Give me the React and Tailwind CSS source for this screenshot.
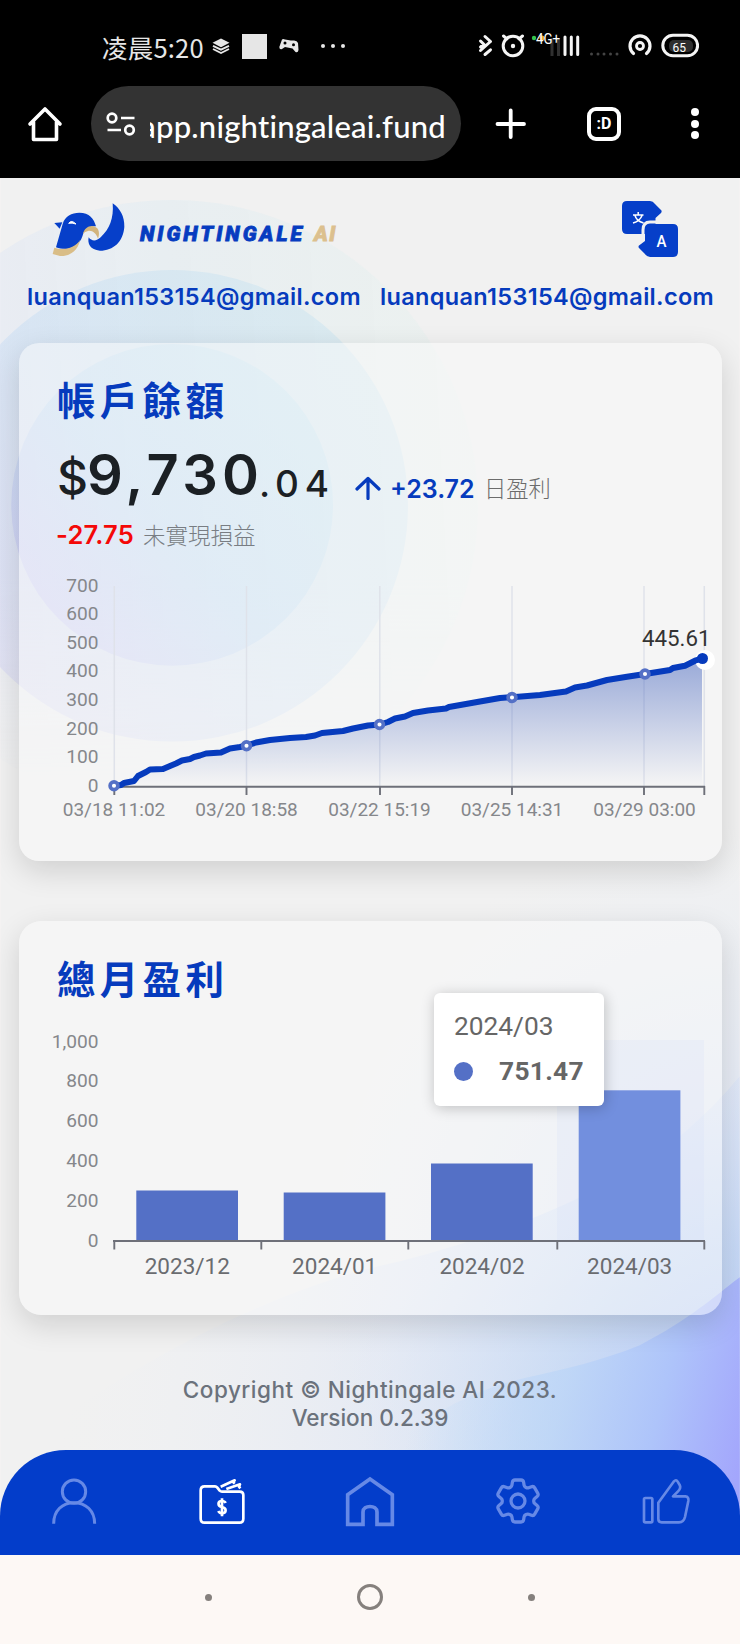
import React from "react";
import { HiOutlineCog6Tooth } from "react-icons/hi2";

const LINE =
  "M114 786L121 785L124 783L134 781L138 776L142 774L146 772L150 769.5L163 769L170 766L176 763.5L182 760.5L190 759L194 757L200 755.5L206 753.5L221 752.5L230 748.5L240 747L246.500 745.500L256 742.500L270 740L290 738L306 737L315 735.5L322 733L343 731L353 728.500L368 725.500L380 724.500L388 722L395 718.500L405 716.500L413 713L428 710.5L446 708.500L449 707L480 701.500L500 698L512 697.200L540 695L566 691.500L575 687.500L587 685.500L607 680L627 676.700L645 674L670 670L673 668L685 665.700L695 660.700L702 658.500";

const ticks = [
  [114, "03/18 11:02"],
  [246.5, "03/20 18:58"],
  [379.5, "03/22 15:19"],
  [512, "03/25 14:31"],
  [644.5, "03/29 03:00"],
];

const bars = [
  { x: 136.300, top: 1190.500, label: "2023/12" },
  { x: 283.700, top: 1192.500, label: "2024/01" },
  { x: 431, top: 1163.500, label: "2024/02" },
  { x: 578.700, top: 1090.300, label: "2024/03", active: true },
];

function StatusBar() {
  return (
    <div className="flex h-[86px] items-start justify-between pr-[41px] pl-[102px] text-[#e6e6e6]">
      <div className="flex h-[92px] items-center">
        <span className="mt-[2px] w-[102px] font-['Noto_Sans_CJK_SC',sans-serif] text-[25.500px] leading-none tracking-[0.200px] whitespace-nowrap">
          凌晨5:20
        </span>
        <svg className="ml-[8px] h-[18px] w-[18px]" viewBox="0 0 18 18" fill="currentColor">
          <path d="M9 1.500L17.500 5.800L9 10.200L0.500 5.800Z" />
          <path d="M1 8.800L9 12.700L17 8.800M1 12L9 16L17 12" fill="none" stroke="currentColor" strokeWidth="1.900" />
        </svg>
        <span className="ml-[12px] h-[25px] w-[25px] bg-[#e6e6e6]" />
        <svg className="ml-[12px] h-[16px] w-[20px]" viewBox="0 0 20 16">
          <path d="M3 1.500Q4 .5 6 1.500L9 2Q12 2.500 14 2.500Q18 2 19 5L19.500 12Q19 15 16.500 14L13.500 10.500L6 9L3 11Q.5 12 .3 9Z" fill="currentColor" />
          <circle cx="6" cy="5" r="1.500" />
          <circle cx="14.500" cy="6.800" r="1.500" />
        </svg>
        <span className="ml-[22px] flex gap-[6px]">
          <i className="h-1 w-1 rounded-full bg-[#e6e6e6]" />
          <i className="h-1 w-1 rounded-full bg-[#e6e6e6]" />
          <i className="h-1 w-1 rounded-full bg-[#e6e6e6]" />
        </span>
      </div>
      <svg className="h-[86px] w-[221px]" viewBox="478 0 221 86" fill="none" stroke="#f5f5f5" strokeWidth="3" strokeLinecap="round">
        <path d="M485 36.500L490.500 41.500M480.500 41L483.500 44L480.500 47M490.500 41.500L480.500 50.500M485 54.500L490.500 49.800" />
        <circle cx="513" cy="46" r="9.800" />
        <path d="M503.500 36L507 38.800M522.500 36L519 38.800" />
        <circle cx="513" cy="46" r="2.200" fill="#f5f5f5" stroke="none" />
        <circle cx="534" cy="38" r="2.200" fill="#36c64f" stroke="none" />
        <circle cx="542" cy="38" r="2.500" fill="#f0a52c" stroke="none" />
        <g stroke="#303030" strokeLinecap="butt"><path d="M552 38V56M558.500 38V56" /></g>
        <path d="M565 37V54.500M571.300 37V54.500M577.700 37V54.500" />
        <text x="536" y="43.500" textLength="24" lengthAdjust="spacingAndGlyphs" fill="#fff" stroke="none" fontFamily="Roboto, sans-serif" fontSize="15">4G+</text>
        <g fill="#444" stroke="none">
          <circle cx="591.500" cy="54" r="1.500" /><circle cx="598" cy="54" r="1.500" /><circle cx="604" cy="54" r="1.500" /><circle cx="610.500" cy="54" r="1.500" /><circle cx="617" cy="54" r="1.500" />
        </g>
        <path d="M633.500 53.500A10 10 0 1 1 646.500 53.500" strokeWidth="3.200" />
        <circle cx="640" cy="46" r="3.500" strokeWidth="2.800" />
        <rect x="669" y="40" width="24" height="12" rx="5" fill="#2e2e2e" stroke="none" />
        <rect x="662.800" y="35.300" width="34.800" height="20.500" rx="10.200" />
        <text x="672.500" y="51.500" textLength="13.500" lengthAdjust="spacingAndGlyphs" fill="#fff" stroke="none" fontFamily="Roboto, sans-serif" fontSize="13.500">65</text>
      </svg>
    </div>
  );
}

function BrowserBar() {
  return (
    <div className="flex h-[92px] items-start">
      <svg className="mt-[20px] ml-[27px] h-[36px] w-[36px]" viewBox="0 0 36 36" fill="none" stroke="#fff" strokeWidth="3.600" strokeLinecap="round" strokeLinejoin="round">
        <path d="M3 18L18 3L33 18M6.500 16V33.500H29.500V16" />
      </svg>
      <div className="ml-[28px] flex h-[75px] w-[370px] items-center rounded-full bg-[#333333] pl-[15px]">
        <svg className="h-[26px] w-[30px]" viewBox="0 0 30 26" fill="none" stroke="#fff" strokeWidth="2.700">
          <circle cx="6" cy="7" r="4.300" /><path d="M15 7H28.500M1.500 19H15" /><circle cx="23.500" cy="19" r="4.300" />
        </svg>
        <div className="mt-[5px] ml-[14px] flex h-[44px] w-[296px] items-center justify-end overflow-hidden">
          <span className="font-[Lato,sans-serif] text-[31px] font-medium tracking-[0.220px] whitespace-nowrap text-white">app.nightingaleai.fund</span>
        </div>
      </div>
      <svg className="mt-[20px] ml-[32px] h-[36px] w-[36px]" viewBox="0 0 36 36" stroke="#fff" strokeWidth="3.800" strokeLinecap="round">
        <path d="M4.500 18H31M17.700 4.500V31" />
      </svg>
      <div className="mt-[21px] ml-[58px] flex h-[34px] w-[34px] items-center justify-center rounded-[9px] border-[4px] border-white font-[Roboto,sans-serif] text-[16px] leading-none font-bold text-white">
        :D
      </div>
      <div className="mt-[22px] ml-[70px] flex flex-col gap-[3.500px]">
        <i className="h-[8px] w-[8px] rounded-full bg-white" />
        <i className="h-[8px] w-[8px] rounded-full bg-white" />
        <i className="h-[8px] w-[8px] rounded-full bg-white" />
      </div>
    </div>
  );
}

function Backdrop() {
  return (
    <svg className="absolute inset-0 h-full w-full" viewBox="0 178 740 1378">
      <defs>
        <linearGradient id="ring" x1="0.100" y1="0.850" x2="0.850" y2="0.150">
          <stop offset="0" stopColor="#b3a9f6" />
          <stop offset="0.450" stopColor="#9ccaf2" />
          <stop offset="1" stopColor="#a8dcf0" />
        </linearGradient>
        <linearGradient id="outerRing" x1="0" y1="0.500" x2="1" y2="0.450">
          <stop offset="0" stopColor="#cfd0fb" stopOpacity="0.240" />
          <stop offset="0.500" stopColor="#c8e6f6" stopOpacity="0.200" />
          <stop offset="1" stopColor="#d9f5ec" stopOpacity="0.180" />
        </linearGradient>
        <linearGradient id="midRing" x1="0" y1="0.750" x2="0.800" y2="0.100">
          <stop offset="0" stopColor="#bfbcf4" stopOpacity="0.260" />
          <stop offset="0.500" stopColor="#b0d2f4" stopOpacity="0.300" />
          <stop offset="1" stopColor="#b4dcf0" stopOpacity="0.300" />
        </linearGradient>
        <linearGradient id="fadeDown" x1="0" y1="0" x2="0" y2="1">
          <stop offset="0" stopColor="#fff" />
          <stop offset="0.600" stopColor="#fff" />
          <stop offset="0.950" stopColor="#000" />
        </linearGradient>
        <mask id="outerMask"><rect x="-140" y="190" width="640" height="640" fill="url(#fadeDown)" /></mask>
        <radialGradient id="wave" gradientUnits="userSpaceOnUse" cx="740" cy="1460" r="680">
          <stop offset="0" stopColor="#a4b6fa" stopOpacity="0.850" />
          <stop offset="0.300" stopColor="#b3cef5" stopOpacity="0.520" />
          <stop offset="0.550" stopColor="#cddcfa" stopOpacity="0.300" />
          <stop offset="1" stopColor="#e8effa" stopOpacity="0" />
        </radialGradient>
        <linearGradient id="wave2" gradientUnits="userSpaceOnUse" x1="430" y1="1350" x2="750" y2="1430">
          <stop offset="0" stopColor="#bddafa" stopOpacity="0" />
          <stop offset="0.420" stopColor="#bbd5f7" stopOpacity="0.750" />
          <stop offset="0.720" stopColor="#aec4fa" />
          <stop offset="1" stopColor="#a3a6fc" />
        </linearGradient>
        <radialGradient id="halo" gradientUnits="userSpaceOnUse" cx="740" cy="1250" r="430">
          <stop offset="0" stopColor="#c9d9fa" stopOpacity="0.600" />
          <stop offset="1" stopColor="#dfeafa" stopOpacity="0" />
        </radialGradient>
      </defs>
      <rect x="0" y="178" width="740" height="1378" fill="#f1f1f1" />
      <circle cx="172" cy="506" r="306" fill="url(#outerRing)" mask="url(#outerMask)" />
      <circle cx="172" cy="506" r="236" fill="url(#midRing)" />
      <circle cx="172" cy="505" r="161" fill="url(#ring)" fillOpacity="0.280" />
      <rect x="300" y="800" width="440" height="756" fill="url(#halo)" />
      <path d="M740 1077Q690 1138 620 1178Q520 1232 400 1262Q220 1300 0 1460V1556H740Z" fill="url(#wave)" />
      <path d="M740 1278C715 1297 690 1320 640 1346C600 1362 565 1370 528 1378Q440 1398 380 1460V1556H740Z" fill="url(#wave2)" />
    </svg>
  );
}

function Header() {
  return (
    <div className="h-[165px] text-[#063bbd]">
      <div className="flex h-[97px] items-start">
        <svg className="mt-[23.500px] ml-[52px] h-[55px] w-[75px]" viewBox="156 66 225 165">
          <path d="M338 70C360 85 374 110 373 140C370 185 340 212 300 212C270 210 262 190 266 172C275 185 290 184 302 172C328 148 342 115 338 70Z" fill="#063fc9" />
          <path d="M168 202L188 132C195 108 215 98 238 98C268 98 282 116 288 139C270 138 257 145 250 160C244 185 228 206 198 207C186 207 176 205 168 202Z" fill="#063fc9" />
          <path d="M163 129L187 127L179 146Z" fill="#063fc9" />
          <path d="M163 203C188 211 224 207 240 180C235 213 206 230 180 228L158 222Z" fill="#d9bd87" />
          <path d="M249 162C253 140 278 130 293 146C299 156 297 168 294 176C289 160 276 150 264 153Q254 154 249 162Z" fill="#d2b47c" />
          <path d="M206 130Q214 118 228 132Q216 128 206 130Z" fill="#fff" stroke="#fff" strokeWidth="3" />
        </svg>
        <span className="mt-[42px] ml-[13px] w-[174px] font-[Roboto,sans-serif] text-[21px] leading-[28px] font-black tracking-[3px] whitespace-nowrap text-[#063cc0] italic [-webkit-text-stroke:0.8px_#063cc0]">NIGHTINGALE</span>
        <span className="mt-[42px] font-[Roboto,sans-serif] text-[21px] leading-[28px] font-black tracking-[1.500px] text-[#dcc08e] italic [-webkit-text-stroke:0.8px_#dcc08e]">AI</span>
        <svg className="mt-[22px] mr-[61px] ml-auto h-[58px] w-[58px]" viewBox="0 0 58 58">
          <path d="M6 1H29Q32 1 34 4L40.500 10.500Q41 12 40 13L34.500 18V34H6Q1 34 1 29V6Q1 1 6 1Z" fill="#063fc9" />
          <path d="M29 24H52Q57 24 57 29V52Q57 57 52 57H29Q26 57 24 54L18 48Q17 46.500 18 45.500L24 41V29Q24 24 29 24Z" fill="#063fc9" />
          <path d="M22 34.500V30Q22 22 29 22H36" fill="none" stroke="#f1f1f1" strokeWidth="3" />
          <path d="M12 15H22.500M17.200 12V15M14 15.500Q15.500 21 22.500 23M21 15.500Q19 21 12 23" fill="none" stroke="#fff" strokeWidth="1.500" />
          <text x="40.500" y="47" textAnchor="middle" fill="#fff" fontFamily="Roboto, sans-serif" fontSize="17" fontWeight="500" textLength="10" lengthAdjust="spacingAndGlyphs">A</text>
        </svg>
      </div>
      <div className="flex justify-between pr-[26px] pl-[27px] font-[Inter,sans-serif] text-[23.500px] leading-[44px] font-semibold tracking-[0.320px]">
        <span className="whitespace-nowrap">luanquan153154@gmail.com</span>
        <span className="whitespace-nowrap">luanquan153154@gmail.com</span>
      </div>
    </div>
  );
}

function Heading({ children }) {
  return (
    <h2 className="pl-[38px] font-['Noto_Sans_CJK_TC',sans-serif] text-[38.500px] leading-[54px] font-bold tracking-[4.300px] text-[#063bbd]">
      {children}
    </h2>
  );
}

function BalanceCard() {
  return (
    <section className="mr-[18px] ml-[19px] h-[518px] rounded-[20px] bg-[#f9f9f9]/50 pt-[28px] shadow-[0_10px_30px_rgba(0,0,0,0.140)]">
      <Heading>帳戶餘額</Heading>
      <div className="mt-[12px] flex h-[76px] items-baseline pl-[38px] font-[Inter,sans-serif] leading-[76px] font-semibold whitespace-nowrap text-[#1b2024]">
        <span className="w-[30px] text-[48px] font-medium">$</span>
        <span className="w-[172px] text-[56px] tracking-[4.300px]">9,730</span>
        <span className="relative top-[2px] w-[96px] text-[37px] font-medium tracking-[5.800px]">.04</span>
        <svg className="mt-[25px] h-[24px] w-[26px] self-center" viewBox="0 0 26 24" fill="none" stroke="#063bbd" strokeWidth="3.200" strokeLinecap="round" strokeLinejoin="round">
          <path d="M2 13L13 2.500L24 13M13 3V22.500" />
        </svg>
        <span className="relative top-[3px] ml-[9px] w-[94px] text-[25px] text-[#063bbd]">+23.72</span>
        <span className="relative top-[2px] font-['Noto_Sans_CJK_TC',sans-serif] text-[22.300px] leading-none font-light text-[#6c6c6c]">日盈利</span>
      </div>
      <div className="mt-[4px] flex h-[36px] items-baseline pl-[37px] leading-[36px] whitespace-nowrap">
        <span className="w-[87px] font-[Inter,sans-serif] text-[25.500px] font-semibold tracking-[0.200px] text-[#f40808]">-27.75</span>
        <span className="font-['Noto_Sans_CJK_TC',sans-serif] text-[22.500px] leading-none font-light text-[#787d83]">未實現損益</span>
      </div>
      <svg className="mt-[17px] h-[291px] w-[703px]" viewBox="19 570 703 291" fontFamily="Roboto, sans-serif">
        <defs>
          <linearGradient id="area" gradientUnits="userSpaceOnUse" x1="0" y1="658" x2="0" y2="786">
            <stop offset="0" stopColor="#2b4fb5" stopOpacity="0.460" />
            <stop offset="1" stopColor="#2b4fb5" stopOpacity="0" />
          </linearGradient>
        </defs>
        <g fill="#85878b" fontSize="19.100" textAnchor="end">
          {[700, 600, 500, 400, 300, 200, 100, 0].map((v, i) => (
            <text key={v} x="98.500" y={591.5 + i * 28.65}>{v}</text>
          ))}
        </g>
        <path d="M114.300 586V786M246.500 586V786M379.800 586V786M512 586V786M644 586V786M704.300 586V786" stroke="#dfe2ea" strokeWidth="1.500" />
        <path d={LINE + "V786H114Z"} fill="url(#area)" />
        <path d="M113 786.700H705M114.300 786V795M246.500 786V795M380 786V795M512 786V795M644 786V795M704.300 786V795" stroke="#6e7079" strokeWidth="1.900" fill="none" />
        <circle cx="705" cy="660" r="10" fill="#fff" />
        <path d={LINE} fill="none" stroke="#063bbd" strokeWidth="6" strokeLinejoin="round" />
        {[[114, 785.7], [246.5, 745.7], [379.5, 724.5], [512, 697.5], [645, 674]].map(([x, y]) => (
          <circle key={x} cx={x} cy={y} r="3.900" fill="#fff" stroke="#5470c6" strokeWidth="3.700" />
        ))}
        <circle cx="702.500" cy="658.500" r="5.500" fill="#063bbd" />
        <text x="710.500" y="646" textAnchor="end" fontSize="22.300" fill="#333">445.61</text>
        <g fill="#85878b" fontSize="19" textAnchor="middle">
          {ticks.map(([x, t]) => <text key={t} x={x} y="815.500">{t}</text>)}
        </g>
      </svg>
    </section>
  );
}

function MonthlyCard() {
  return (
    <section className="relative mt-[60px] mr-[18px] ml-[19px] h-[394px] rounded-[22px] bg-[#f9f9f9]/50 pt-[29px] shadow-[0_10px_30px_rgba(0,0,0,0.140)]">
      <Heading>總月盈利</Heading>
      <svg className="mt-[16px] h-[295px] w-[703px]" viewBox="19 1020 703 295" fontFamily="Roboto, sans-serif">
        <rect x="557" y="1040" width="147" height="201" fill="#d2dbfa" fillOpacity="0.200" />
        <g fill="#85878b" fontSize="19.100" textAnchor="end">
          {["1,000", "800", "600", "400", "200", "0"].map((v, i) => (
            <text key={v} x="98.500" y={1047.5 + i * 39.9}>{v}</text>
          ))}
        </g>
        {bars.map((b) => (
          <g key={b.label}>
            <rect x={b.x} y={b.top} width="101.700" height={1241 - b.top} fill={b.active ? "#728fde" : "#5470c6"} />
            <text x={b.x + 51} y="1274" fontSize="22.500" textAnchor="middle" fill="#6a6c70">{b.label}</text>
          </g>
        ))}
        <path d="M113 1241H705M114.300 1241V1249.500M261.300 1241V1249.500M408.300 1241V1249.500M557.300 1241V1249.500M704.300 1241V1249.500" stroke="#6e7079" strokeWidth="1.900" />
      </svg>
      <div className="absolute top-[72px] left-[415px] h-[113px] w-[170px] rounded-[6px] bg-white pt-[15px] pl-[20px] font-[Roboto,sans-serif] text-[26.300px] leading-[36px] text-[#666] shadow-[1px_2px_14px_rgba(0,0,0,0.220)]">
        <div>2024/03</div>
        <div className="mt-[9px] flex items-center">
          <i className="h-[19px] w-[19px] rounded-full bg-[#5470c6]" />
          <b className="ml-[26px] font-bold tracking-[0.300px]">751.47</b>
        </div>
      </div>
    </section>
  );
}

function NavIcon({ box, children, active }) {
  return (
    <svg className={active ? "h-[54px] w-[54px] text-white" : "h-[54px] w-[54px] text-[#6689e6]"} viewBox={box} fill="none" stroke="currentColor" strokeLinejoin="round">
      {children}
    </svg>
  );
}

function BottomNav() {
  return (
    <nav className="grid h-[105px] grid-cols-5 items-center justify-items-center rounded-t-[66px] bg-[#033dca] pb-[3px]">
      <NavIcon box="50 101 162 162">
        <circle cx="131" cy="154" r="35" strokeWidth="9" />
        <path d="M70 250C70 211 96 187 131 187S193 211 193 250" strokeWidth="9" />
      </NavIcon>
      <NavIcon active box="496 101 162 162">
        <path d="M525 138H556Q560 138 563 142L570 151Q573 154 577 154H630Q641 154 641 164V235Q641 247 629 247H525Q513 247 513 235V150Q513 138 525 138Z" strokeWidth="8" />
        <path d="M573 139L615 120L611 126L615 130M590 146L631 132L628 139L632 144" strokeWidth="8" />
        <path d="M588 188Q585 182 577 182C563 182 563 197 577 200C592 203 591 219 577 219Q569 219 566 212M577 174V228" strokeWidth="8" />
      </NavIcon>
      <NavIcon box="10 101 162 162">
        <path d="M91 116L158 163V252H112V215C112 193 70 193 70 215V252H24V163Z" strokeWidth="11" strokeLinejoin="miter" />
      </NavIcon>
      <HiOutlineCog6Tooth className="h-[56px] w-[56px] text-[#6689e6]" strokeWidth="1.400" />
      <NavIcon box="898 101 162 162">
        <rect x="913" y="173" width="25" height="73" rx="4" strokeWidth="8" />
        <path d="M956 187L1003 123Q1009 116 1014 124L1020 134Q1025 143 1015 153L1000 168H1037Q1048 169 1046 182L1036 230Q1032 246 1018 246H966Q956 246 956 236Z" strokeWidth="8" />
      </NavIcon>
    </nav>
  );
}

export default function App() {
  return (
    <div className="h-[1644px] w-[740px] overflow-hidden bg-[#fdf8f5]">
      <div className="bg-black">
        <StatusBar />
        <BrowserBar />
      </div>
      <main className="relative h-[1377px]">
        <Backdrop />
        <div className="relative">
          <Header />
          <BalanceCard />
          <MonthlyCard />
          <footer className="flex h-[135px] flex-col items-center pt-[61px] font-[Inter,sans-serif] text-[22.500px] leading-[27.500px] font-medium text-[#6b727c]">
            <span className="tracking-[0.500px]">Copyright © Nightingale AI 2023.</span>
            <span>Version 0.2.39</span>
          </footer>
          <BottomNav />
        </div>
      </main>
      <div className="flex h-[89px] items-center justify-center gap-[145px]">
        <i className="mb-[5px] h-[7px] w-[7px] rounded-full bg-[#85807d]" />
        <i className="mb-[5px] h-[26px] w-[26px] rounded-full border-[3px] border-[#85807d]" />
        <i className="mb-[5px] h-[7px] w-[7px] rounded-full bg-[#85807d]" />
      </div>
    </div>
  );
}
